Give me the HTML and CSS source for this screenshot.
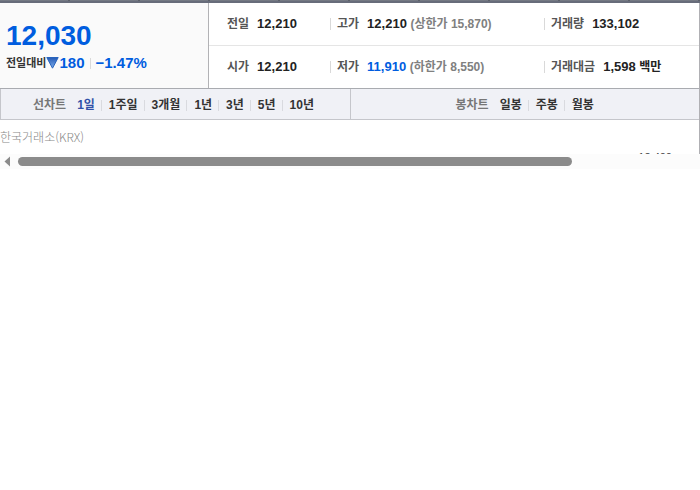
FILE: index.html
```html
<!DOCTYPE html>
<html lang="ko">
<head>
<meta charset="utf-8">
<title>시세</title>
<link rel="stylesheet" href="styles.css">
</head>
<body>
<main class="quote">
  <div class="tab-edge"><span></span><span></span><span></span><span></span><span></span><span></span><span></span><span></span><span></span><span></span></div>
  <section class="summary">
    <div class="today">
      <strong class="price">12,030</strong>
      <div class="change">
        <span class="change-label">전일대비</span>
        <svg class="down" width="13" height="12" viewBox="0 0 13 12" aria-hidden="true">
          <defs><linearGradient id="fall" x1="0" y1="0" x2="0" y2="1"><stop offset="0" stop-color="#2459b4"/><stop offset="1" stop-color="#7fb0ee"/></linearGradient></defs>
          <path d="M.8.5h11.4L6.5 11.2z" fill="url(#fall)" stroke="#2864bd"/>
        </svg>
        <span class="change-value">180</span>
        <i class="bar"></i>
        <span class="change-value">−1.47%</span>
      </div>
    </div>
    <dl class="figures">
      <div class="cell"><dt>전일</dt><dd>12,210</dd></div>
      <div class="cell divided"><dt>고가</dt><dd>12,210 <span class="limit">(상한가 15,870)</span></dd></div>
      <div class="cell divided"><dt>거래량</dt><dd>133,102</dd></div>
      <div class="cell"><dt>시가</dt><dd>12,210</dd></div>
      <div class="cell divided"><dt>저가</dt><dd><span class="low">11,910</span> <span class="limit">(하한가 8,550)</span></dd></div>
      <div class="cell divided"><dt>거래대금</dt><dd>1,598 <span class="unit">백만</span></dd></div>
    </dl>
  </section>
  <nav class="periods">
    <div class="group line">
      <span class="group-name">선차트</span>
      <ul>
        <li><a class="on" href="#d1">1일</a></li><li><a href="#w1">1주일</a></li><li><a href="#m3">3개월</a></li><li><a href="#y1">1년</a></li><li><a href="#y3">3년</a></li><li><a href="#y5">5년</a></li><li><a href="#y10">10년</a></li>
      </ul>
    </div>
    <div class="group candle">
      <span class="group-name">봉차트</span>
      <ul>
        <li><a href="#day">일봉</a></li><li><a href="#week">주봉</a></li><li><a href="#month">월봉</a></li>
      </ul>
    </div>
  </nav>
  <section class="chart">
    <span class="market">한국거래소(KRX)</span>
    <span class="axis">12,400</span>
  </section>
</main>
<div class="scroll">
  <svg width="18" height="15" viewBox="0 0 18 15" aria-hidden="true"><path d="M10 2.500v10L4.500 7.500z" fill="#8b8b8b"/></svg>
  <span class="thumb"></span>
</div>
</body>
</html>
```
FILE: styles.css
```css
* { box-sizing: border-box; }
body {
  margin: 0;
  background: #fff;
  color: #222;
  font-family: "Liberation Sans", "Noto Sans CJK KR", sans-serif;
  font-size: 12px;
  line-height: 16px;
}
dl, dd, ul { margin: 0; padding: 0; }
.quote { border-right: 1px solid #b0b0b4; }
.tab-edge {
  display: grid;
  grid-template-columns: repeat(10, 1fr);
  height: 3px;
  margin-right: -1px;
  background: #676c7a;
}
.tab-edge span { height: 1px; background: #747983; border-right: 2px solid #5c6069; }
.summary {
  display: grid;
  grid-template-columns: 209fr 490fr;
  border-bottom: 1px solid #a9abb0;
}
.today {
  padding: 16px 0 0 6px;
  background: #fafafa;
  border-right: 1px solid #b2b2b5;
}
.price {
  display: block;
  color: #005ddf;
  font-size: 28px;
  line-height: 34px;
}
.change { display: flex; align-items: center; line-height: 20px; }
.change-label { font-weight: 700; font-size: 11px; color: #333; }
.change-value {
  color: #005ddf;
  font-weight: 700;
  font-size: 15px;
}
.bar { width: 1px; height: 11px; margin: 0 5px; background: #dadada; }
.figures {
  display: grid;
  grid-template-columns: 121fr 214fr 155fr;
}
.cell {
  display: flex;
  align-items: center;
  height: 42px;
  padding: 0 0 0 18px;
  white-space: nowrap;
}
.cell:nth-child(-n+3) { height: 43px; border-bottom: 1px solid #e5e5e5; }
.cell.divided { padding-left: 0; }
.divided::before { content: ""; width: 1px; height: 12px; margin-right: 6px; background: #d9d9d9; }
dt { margin-right: 8px; color: #555; font-weight: 700; }
dd { font-size: 13px; font-weight: 700; }
.limit { color: #808080; font-size: 12px; }
.unit { font-size: 12px; }
.low { color: #005ddf; }
.periods {
  display: grid;
  grid-template-columns: 1fr 1fr;
  height: 31px;
  background: #f0f1f6;
  border-bottom: 1px solid #c5c6cb;
}
.group {
  display: flex;
  align-items: center;
  padding-top: 2px;
  border-left: 1px solid #c5c6cb;
  font-weight: 700;
}
.line { padding-left: 32px; }
.candle { padding-left: 105px; }
.group-name { margin-right: 4px; color: #777; }
.group ul { display: flex; list-style: none; }
.group li { display: flex; align-items: center; }
.group li + li::before { content: ""; width: 1px; height: 11px; background: #d9dadf; }
.group a { padding: 0 6px 0 7px; color: #333; text-decoration: none; }
.group .on { color: #3150a8; }
.chart {
  display: flex;
  justify-content: space-between;
  height: 34px;
  padding: 9px 27px 0 0;
  overflow: hidden;
}
.market { color: #888; font-family: "Noto Sans CJK KR", sans-serif; font-weight: 300; }
.axis { padding-top: 20px; color: #444; font-size: 11px; }
.scroll {
  display: grid;
  grid-template-columns: 18px 554fr 128fr;
  align-items: center;
  height: 15px;
  background: #fcfcfc;
}
.thumb { height: 9px; border-radius: 5px; background: #8b8b8b; }
```
